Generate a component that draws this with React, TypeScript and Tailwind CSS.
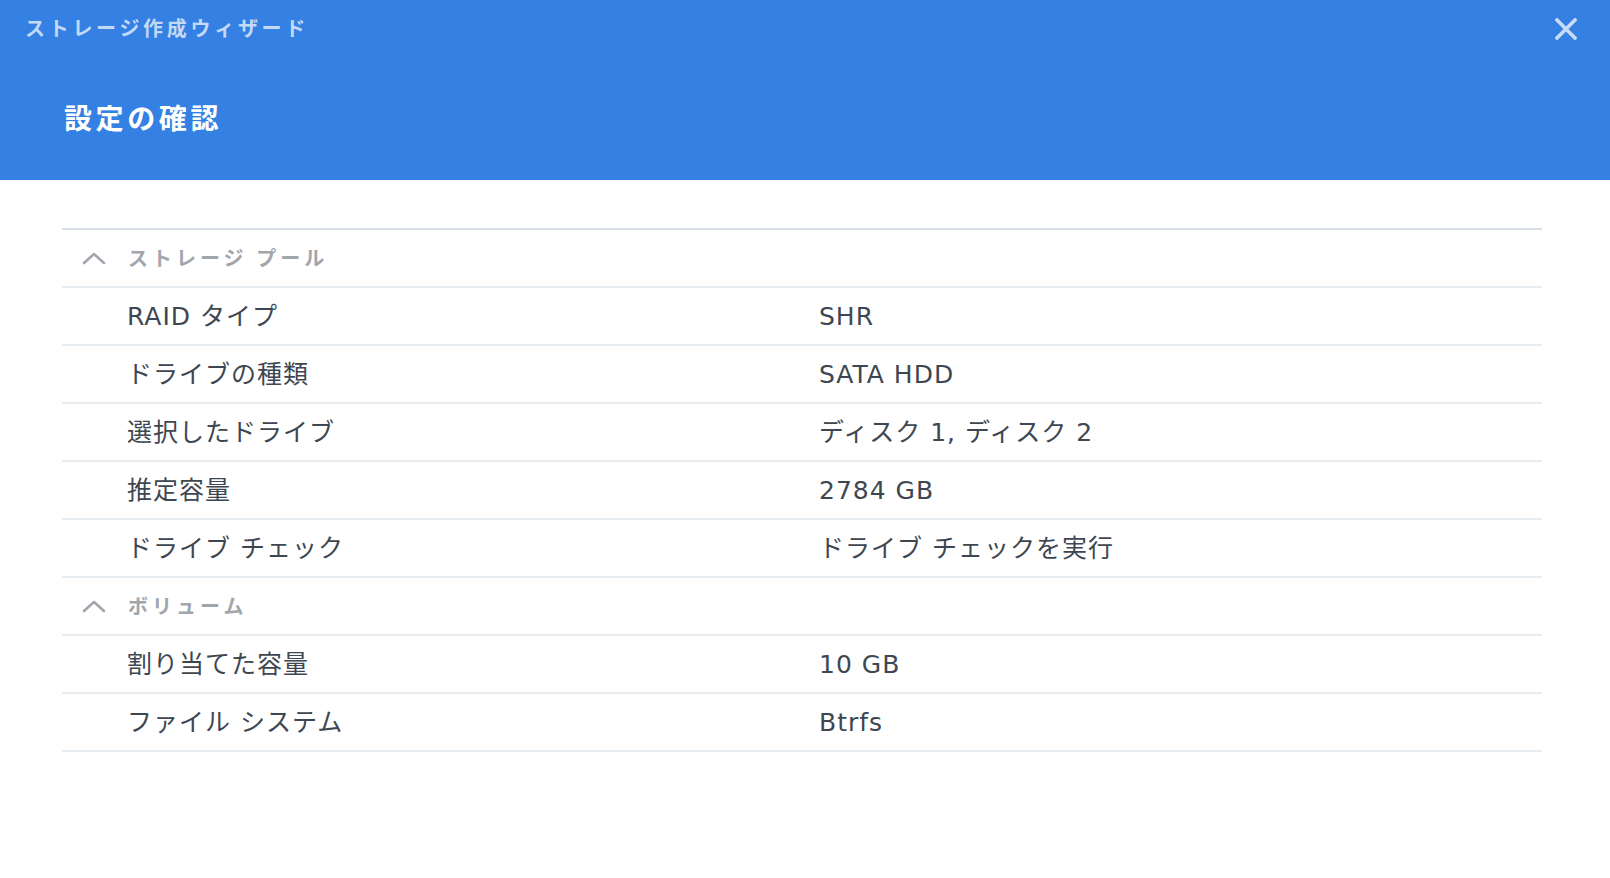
import React from 'react';

type Row = { label: string; value: string };
type Section = { title: string; rows: Row[] };

const sections: Section[] = [
  {
    title: 'ストレージ プール',
    rows: [
      { label: 'RAID タイプ', value: 'SHR' },
      { label: 'ドライブの種類', value: 'SATA HDD' },
      { label: '選択したドライブ', value: 'ディスク 1, ディスク 2' },
      { label: '推定容量', value: '2784 GB' },
      { label: 'ドライブ チェック', value: 'ドライブ チェックを実行' },
    ],
  },
  {
    title: 'ボリューム',
    rows: [
      { label: '割り当てた容量', value: '10 GB' },
      { label: 'ファイル システム', value: 'Btrfs' },
    ],
  },
];

const font = { fontFamily: "'DejaVu Sans', 'Noto Sans CJK JP', sans-serif" };
const cjk = { fontFamily: "'Noto Sans CJK JP', sans-serif" };

const Chevron = () => (
  <svg width="24" height="14" viewBox="0 0 24 14" fill="none" className="shrink-0">
    <path d="M2 12 L12 3 L22 12" stroke="#a1a6ac" strokeWidth="2.6" strokeLinecap="round" strokeLinejoin="round" />
  </svg>
);

export default function App() {
  return (
    <div className="w-[1610px] h-[878px] bg-white overflow-hidden" style={font}>
      {/* header */}
      <div className="h-[180px] bg-[#3580e3] flex flex-col">
        <div className="flex items-start justify-between pl-[25px] pr-[33px] pt-[14px]">
          <h1 className="text-[20px] leading-[28px] font-bold tracking-[3.7px] text-[#c3d9f6]" style={cjk}>
            ストレージ作成ウィザード
          </h1>
          <svg width="22" height="22" viewBox="0 0 22 22" className="mt-[4px]">
            <path d="M2 2 L20 20 M20 2 L2 20" stroke="#c8dcf7" strokeWidth="3.6" strokeLinecap="square" />
          </svg>
        </div>
        <h2 className="mt-[57px] pl-[64px] text-[28px] leading-[36px] font-bold tracking-[3.6px] text-white" style={cjk}>
          設定の確認
        </h2>
      </div>

      {/* summary table */}
      <div className="mt-[48px] mx-[62px] w-[1480px] border-t-2 border-[#d7dfe8]">
        {sections.map((section) => (
          <div key={section.title}>
            <div className="h-[58px] border-b-2 border-[#e7ecf1] flex items-center pl-[20px] gap-[22px]">
              <Chevron />
              <span className="text-[20px] font-bold tracking-[4px] text-[#a1a6ac]" style={cjk}>
                {section.title}
              </span>
            </div>
            {section.rows.map((row) => (
              <div
                key={row.label}
                className="h-[58px] border-b-2 border-[#e7ecf1] grid grid-cols-[757px_1fr] items-center pt-[2px] text-[25px] tracking-[1px] text-[#3e4751]"
              >
                <span className="pl-[65px]">{row.label}</span>
                <span>{row.value}</span>
              </div>
            ))}
          </div>
        ))}
      </div>
    </div>
  );
}
